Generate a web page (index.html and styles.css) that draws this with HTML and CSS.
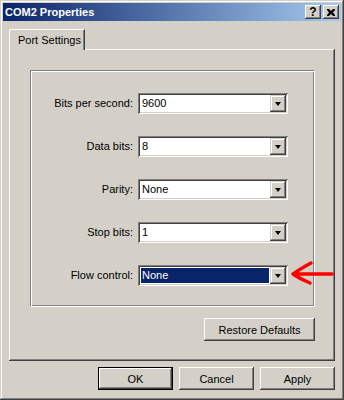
FILE: index.html
```html
<!DOCTYPE html>
<html lang="en">
<head>
    <meta charset="UTF-8">
    <meta name="viewport" content="width=device-width, initial-scale=1.0">
    <title>COM2 Properties</title>
    <link rel="stylesheet" href="styles.css">
</head>
<body>
    <div class="window">
        <div class="titlebar">
            <span class="title">COM2 Properties</span>
            <div class="caption-buttons">
                <div class="cap-btn help">?</div>
                <div class="cap-btn">
                    <svg width="8" height="7" viewBox="0 0 8 7">
                        <path d="M0 0h2l2 2l2 -2h2v1l-2 2.5l2 2.5v1h-2l-2 -2l-2 2h-2v-1l2 -2.5l-2 -2.5z" fill="#000"/>
                    </svg>
                </div>
            </div>
        </div>

        <div class="dialog">
            <div class="tabs">
                <div class="tab active">Port Settings</div>
            </div>
            <div class="tab-panel">
                <div class="group">
                    <label>Bits per second:</label>
                    <div class="combo"><span class="combo-value">9600</span><span class="combo-btn"></span></div>

                    <label>Data bits:</label>
                    <div class="combo"><span class="combo-value">8</span><span class="combo-btn"></span></div>

                    <label>Parity:</label>
                    <div class="combo"><span class="combo-value">None</span><span class="combo-btn"></span></div>

                    <label>Stop bits:</label>
                    <div class="combo"><span class="combo-value">1</span><span class="combo-btn"></span></div>

                    <label>Flow control:</label>
                    <div class="combo focused"><span class="combo-value">None</span><span class="combo-btn"></span></div>
                </div>
                <div class="panel-actions">
                    <div class="btn restore">Restore Defaults</div>
                </div>
            </div>
            <div class="dialog-actions">
                <div class="btn default">OK</div>
                <div class="btn">Cancel</div>
                <div class="btn">Apply</div>
            </div>
        </div>

        <!-- red annotation arrow -->
        <svg class="annotation" width="46" height="28" viewBox="0 0 46 28">
            <path d="M42 14 L4 14 M21 3 Q10 9 3 14 Q10 19 20 23" fill="none" stroke="#f00" stroke-width="3.5" stroke-linecap="round" stroke-linejoin="round"/>
        </svg>
    </div>
</body>
</html>
```

FILE: styles.css
```css
body {
    margin: 0;
    font-family: "Liberation Sans", Arial, sans-serif;
    font-size: 11px;
    color: #000;
    background: #d4d0c8;
}

.window {
    position: relative;
    width: 344px;
    height: 400px;
    box-sizing: border-box;
    padding: 3px;
    background: #d4d0c8;
    box-shadow: inset -1px -1px #404040, inset 1px 1px #d4d0c8,
                inset -2px -2px #808080, inset 2px 2px #fff;
}

.titlebar {
    height: 18px;
    display: flex;
    align-items: center;
    justify-content: space-between;
    padding-left: 2px;
    background: linear-gradient(to right, #0a246a, #a6caf0);
}

.title {
    color: #fff;
    font-weight: bold;
    font-size: 11px;
}

.caption-buttons {
    display: flex;
    gap: 2px;
    margin-right: 2px;
}

.cap-btn {
    width: 16px;
    height: 14px;
    display: flex;
    align-items: center;
    justify-content: center;
    background: #d4d0c8;
    box-shadow: inset -1px -1px #404040, inset 1px 1px #fff,
                inset -2px -2px #808080;
}

.cap-btn.help {
    font-weight: bold;
    font-size: 12px;
    line-height: 14px;
}

.dialog {
    padding: 8px 6px 0 6px;
}

.tabs {
    display: flex;
}

.tab {
    position: relative;
    width: 76px;
    height: 21px;
    box-sizing: border-box;
    margin-bottom: -1px;
    padding-left: 8px;
    line-height: 20px;
    background: #d4d0c8;
    border-left: 1px solid #fff;
    border-top: 1px solid #fff;
    border-right: 1px solid #404040;
    border-top-left-radius: 2px;
    box-shadow: inset -1px 0 #808080;
}

.tab-panel {
    height: 312px;
    box-sizing: border-box;
    padding: 21px 20px 0 21px;
    box-shadow: inset -1px -1px #404040, inset 1px 1px #fff,
                inset -2px -2px #808080;
}

.group {
    width: 285px;
    height: 237px;
    box-sizing: border-box;
    padding: 22px 26px 0 0;
    border: 1px solid;
    border-color: #808080 #fff #fff #808080;
    box-shadow: inset 1px 1px #fff, inset -1px -1px #808080;
    display: grid;
    grid-template-columns: 1fr 150px;
    grid-auto-rows: 21px;
    column-gap: 5px;
    row-gap: 22px;
}

.group label {
    text-align: right;
    line-height: 21px;
}

.combo {
    display: flex;
    padding: 2px;
    background: #fff;
    box-shadow: inset 1px 1px #808080, inset -1px -1px #fff,
                inset 2px 2px #404040, inset -2px -2px #d4d0c8;
}

.combo-value {
    flex: 1;
    margin: 1px;
    padding-left: 1px;
    line-height: 15px;
}

.combo.focused .combo-value {
    background: #0a246a;
    color: #fff;
}

.combo-btn {
    width: 16px;
    height: 17px;
    display: flex;
    align-items: center;
    justify-content: center;
    background: #d4d0c8;
    box-shadow: inset -1px -1px #404040, inset 1px 1px #d4d0c8,
                inset -2px -2px #808080, inset 2px 2px #fff;
}

.combo-btn::after {
    content: "";
    border-left: 3.5px solid transparent;
    border-right: 3.5px solid transparent;
    border-top: 4px solid #000;
}

.panel-actions {
    width: 285px;
    display: flex;
    justify-content: flex-end;
    margin-top: 11px;
}

.btn {
    width: 75px;
    height: 23px;
    box-sizing: border-box;
    display: flex;
    align-items: center;
    justify-content: center;
    background: #d4d0c8;
    box-shadow: inset -1px -1px #404040, inset 1px 1px #fff,
                inset -2px -2px #808080;
}

.btn.restore {
    width: 111px;
}

.btn.default {
    border: 1px solid #000;
}

.dialog-actions {
    display: flex;
    justify-content: flex-end;
    gap: 6px;
    margin-top: 6px;
}

.annotation {
    position: absolute;
    left: 290px;
    top: 260px;
}
```
